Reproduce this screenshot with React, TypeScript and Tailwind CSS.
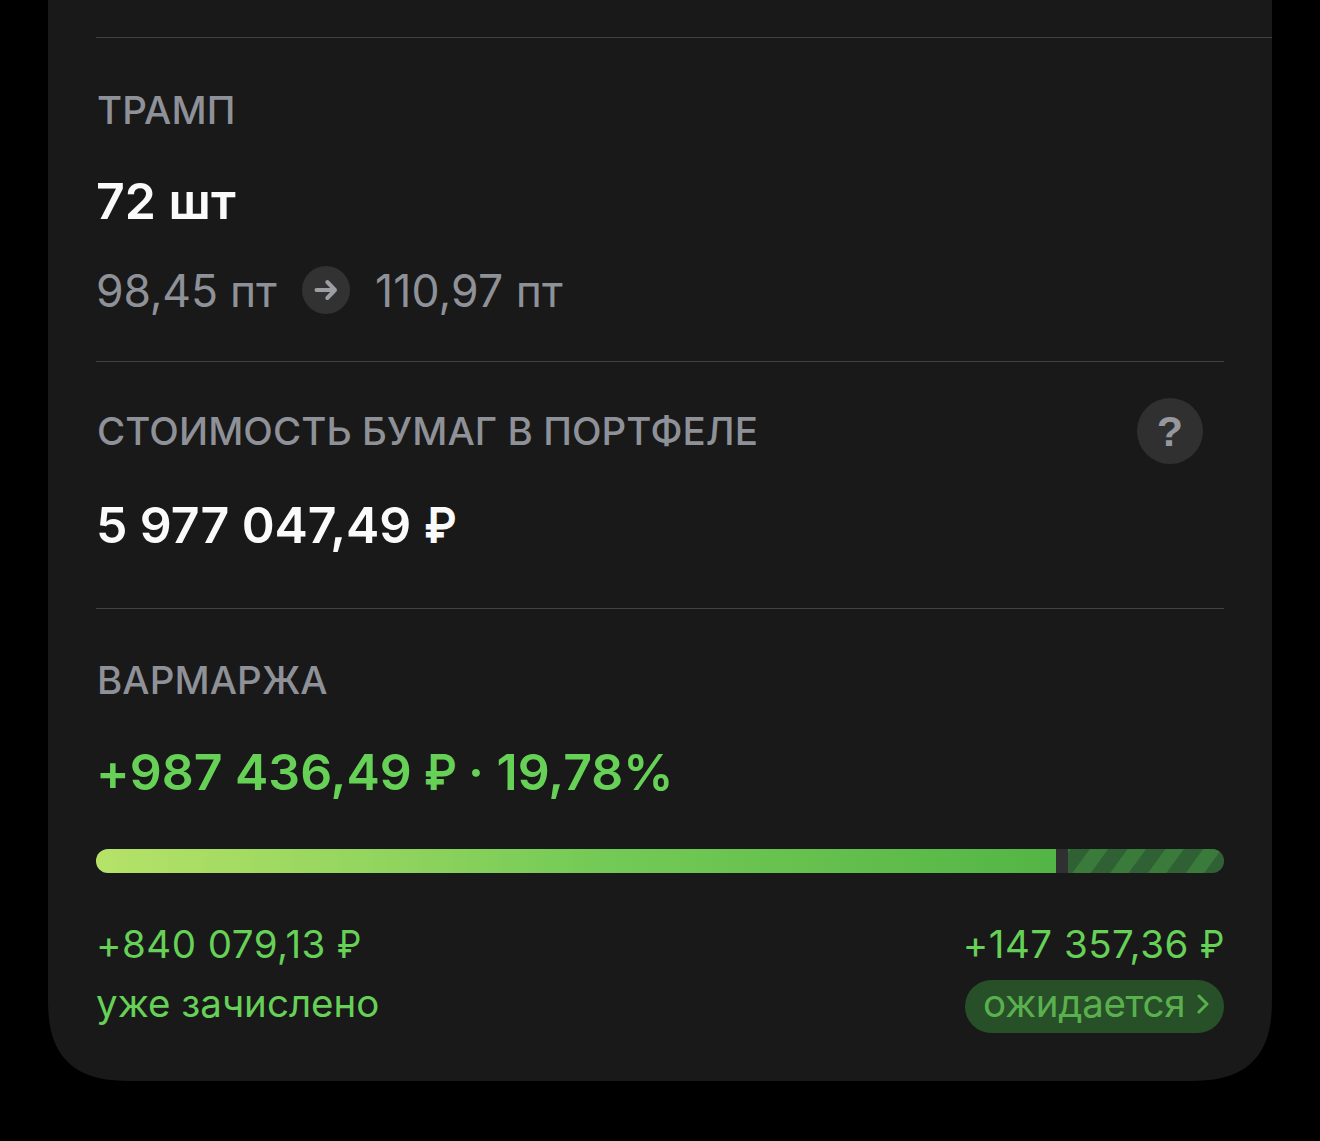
import type { ReactNode } from 'react'

const stripes = [-33.5, 4.3, 42.1, 79.9, 117.7, 155.5]

function Label({ children }: { children: ReactNode }) {
  return <p className="pl-px text-[38.5px] leading-[48px] font-[450] tracking-[0.08px] text-[#8f9198]">{children}</p>
}

function Ruble() {
  return <span className="inline-block w-[0.62em] origin-left scale-x-[0.9]">₽</span>
}

export default function App() {
  return (
    <main className="h-[1141px] overflow-hidden bg-black px-12 font-['Inter',sans-serif] [font-feature-settings:'calt'_0]">
      <section className="h-[1081px] rounded-b-[84px] bg-[#191919] pl-12 [corner-shape:superellipse(1.4)]">
        <div className="h-[38px] border-b border-[#424242]" />
        <div className="pr-12">
          <div className="h-[324px] border-b border-[#424242] pt-12">
            <Label>ТРАМП</Label>
            <p className="mt-[37px] text-[50px] leading-[60px] font-semibold text-[#fafafa]">72 шт</p>
            <div className="mt-[35px] flex h-12 items-center text-[44.5px] tracking-[-0.2px] text-[#8f9198]">
              <span className="w-[206px] pt-0.5">98,45 пт</span>
              <span className="mr-[25px] flex size-12 items-center justify-center rounded-full bg-[#323233]">
                <svg viewBox="0 0 24 24" className="size-6" fill="none" stroke="#9c9ea3" strokeWidth="4" strokeLinecap="round" strokeLinejoin="round">
                  <path d="M2.5 12h18M13.3 4l7.7 8-7.7 8" />
                </svg>
              </span>
              <span className="pt-0.5 tracking-[0.1px]">110,97 пт</span>
            </div>
          </div>
          <div className="h-[247px] border-b border-[#424242] pt-9">
            <div className="flex h-[66px] items-center justify-between pr-[21px]">
              <Label>СТОИМОСТЬ БУМАГ В ПОРТФЕЛЕ</Label>
              <button className="size-[66px] rounded-full bg-[#303031] font-['Liberation_Sans',sans-serif] text-[43px] leading-[66px] font-bold text-[#96989e]">?</button>
            </div>
            <p className="mt-[31px] text-[50px] leading-[60px] font-semibold tracking-[-0.1px] text-[#fafafa]">
              5 977 047,49 <Ruble />
            </p>
          </div>
          <div className="pt-[47px]">
            <Label>ВАРМАРЖА</Label>
            <p className="mt-[38px] text-[50px] leading-[60px] font-semibold text-[#66d057]">
              +987 436,49 <Ruble /> · 19,78%
            </p>
            <div className="mt-[47px] flex h-6 gap-3 overflow-hidden rounded-full bg-[#303032]">
              <div className="w-[960px] bg-linear-to-r from-[#b6e268] via-[#76cb57] to-[#53b545]" />
              <svg viewBox="0 0 156 24" className="h-6 w-[156px] bg-[#2f6134]" fill="#3a7a3b">
                {stripes.map((x) => (
                  <path key={x} d={`M${x} 24h18.5L${x + 36} 0h-18.5z`} />
                ))}
              </svg>
            </div>
            <div className="mt-[41px] flex justify-between text-[38.5px] leading-[60px] text-[#66d057]">
              <div>
                <p className="tracking-[0.5px]">
                  +840 079,13 <Ruble />
                </p>
                <p className="-mt-px">уже зачислено</p>
              </div>
              <div className="flex flex-col items-end">
                <p className="tracking-[0.5px]">
                  +147 357,36 <Ruble />
                </p>
                <button className="mt-1.5 flex h-[53px] w-[259px] items-center rounded-full bg-[#275029] pl-[18px] text-[#5bb04e]">
                  <span className="-mt-[7px] tracking-[-0.3px]">ожидается</span>
                  <svg viewBox="0 0 12 20" className="-mt-1.5 ml-3 h-5 w-3" fill="none" stroke="currentColor" strokeWidth="3" strokeLinecap="round" strokeLinejoin="round">
                    <path d="M2 2l8 8-8 8" />
                  </svg>
                </button>
              </div>
            </div>
          </div>
        </div>
      </section>
    </main>
  )
}
